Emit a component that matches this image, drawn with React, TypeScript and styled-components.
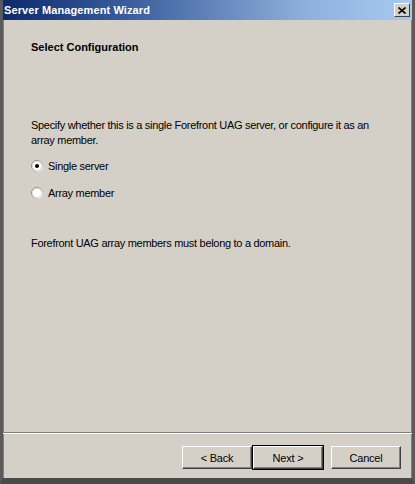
import React from "react";
import styled, { createGlobalStyle } from "styled-components";

const Global = createGlobalStyle`
  html, body { margin: 0; padding: 0; background: #d4d0c8; }
  body { font-family: Tahoma, "Liberation Sans", "DejaVu Sans", sans-serif; font-size: 11px; color: #000; }
`;

const Window = styled.div`
  width: 415px;
  height: 484px;
  box-sizing: border-box;
  display: flex;
  flex-direction: column;
  background: #d4d0c8;
  border-left: 3px solid #5a5a5a;
  border-right: 3px solid #5a5a5a;
  border-bottom: 6px solid #4a4a4a;
  box-shadow: inset 1px 0 0 #808080, inset -1px 0 0 #808080;
`;

const TitleBar = styled.div`
  height: 20px;
  display: flex;
  align-items: center;
  justify-content: space-between;
  padding: 0 2px 0 1px;
  background: linear-gradient(to right, #0c2a6e 0%, #3a5c9c 30%, #8fb2dd 75%, #a6caf0 100%);
`;

const TitleText = styled.span`
  color: #fff;
  font-weight: bold;
  font-size: 11px;
  letter-spacing: 0.1px;
`;

const CloseButton = styled.div`
  width: 16px;
  height: 14px;
  box-sizing: border-box;
  background: #d4d0c8;
  border-top: 1px solid #fff;
  border-left: 1px solid #fff;
  border-right: 1px solid #404040;
  border-bottom: 1px solid #404040;
  display: flex;
  align-items: center;
  justify-content: center;
`;

const Content = styled.div`
  flex: 1;
  padding: 0 0 0 28px;
  display: flex;
  flex-direction: column;
  letter-spacing: -0.3px;
`;

const Heading = styled.div`
  font-weight: bold;
  line-height: 14px;
  margin-top: 20px;
  letter-spacing: 0;
`;

const Paragraph = styled.p<{ $top: number }>`
  margin: ${(p) => p.$top}px 0 0 0;
  line-height: 15px;
  width: 350px;
`;

const RadioGroup = styled.div`
  display: flex;
  flex-direction: column;
  gap: 11px;
  margin-top: 10px;
`;

const RadioRow = styled.label`
  display: flex;
  align-items: center;
  gap: 5px;
  height: 16px;
`;

const Separator = styled.div`
  height: 1px;
  background: #808080;
  border-bottom: 1px solid #fff;
`;

const Footer = styled.div`
  display: flex;
  justify-content: flex-end;
  padding: 12px 11px 9px 0;
  letter-spacing: -0.2px;
`;

const Button = styled.div<{ $default?: boolean; $gap?: number }>`
  width: 70px;
  height: 23px;
  box-sizing: border-box;
  margin-left: ${(p) => p.$gap ?? 0}px;
  display: flex;
  align-items: center;
  justify-content: center;
  background: #d4d0c8;
  border-top: 1px solid #fff;
  border-left: 1px solid #fff;
  border-right: 1px solid #404040;
  border-bottom: 1px solid #404040;
  box-shadow: ${(p) =>
    p.$default ? "inset -1px -1px 0 #808080, 0 0 0 1px #000" : "inset -1px -1px 0 #808080"};
`;

const Radio = ({ checked }: { checked?: boolean }) => (
  <svg width="12" height="12" viewBox="0 0 12 12">
    <defs>
      <linearGradient id={checked ? "rg1" : "rg2"} x1="0" y1="0" x2="1" y2="1">
        <stop offset="0" stopColor="#808080" />
        <stop offset="0.5" stopColor="#a0a0a0" />
        <stop offset="1" stopColor="#ffffff" />
      </linearGradient>
    </defs>
    <circle cx="6" cy="6" r="5.5" fill="#fff" stroke={`url(#${checked ? "rg1" : "rg2"})`} strokeWidth="1" />
    <circle cx="6" cy="6" r="4.5" fill="none" stroke="#d4d0c8" strokeWidth="0.6" />
    {checked && <circle cx="6" cy="6" r="2" fill="#000" />}
  </svg>
);

export default function App() {
  return (
    <>
      <Global />
      <Window>
        <TitleBar>
          <TitleText>Server Management Wizard</TitleText>
          <CloseButton>
            <svg width="8" height="7" viewBox="0 0 8 7">
              <path d="M0.5 0.5 L7.5 6.5 M7.5 0.5 L0.5 6.5" stroke="#000" strokeWidth="1.6" />
            </svg>
          </CloseButton>
        </TitleBar>
        <Content>
          <Heading>Select Configuration</Heading>
          <Paragraph $top={64}>
            Specify whether this is a single Forefront UAG server, or configure it as an array member.
          </Paragraph>
          <RadioGroup>
            <RadioRow>
              <Radio checked />
              <span>Single server</span>
            </RadioRow>
            <RadioRow>
              <Radio />
              <span>Array member</span>
            </RadioRow>
          </RadioGroup>
          <Paragraph $top={35}>Forefront UAG array members must belong to a domain.</Paragraph>
        </Content>
        <Separator />
        <Footer>
          <Button>&lt; Back</Button>
          <Button $default $gap={1}>Next &gt;</Button>
          <Button $gap={8}>Cancel</Button>
        </Footer>
      </Window>
    </>
  );
}
